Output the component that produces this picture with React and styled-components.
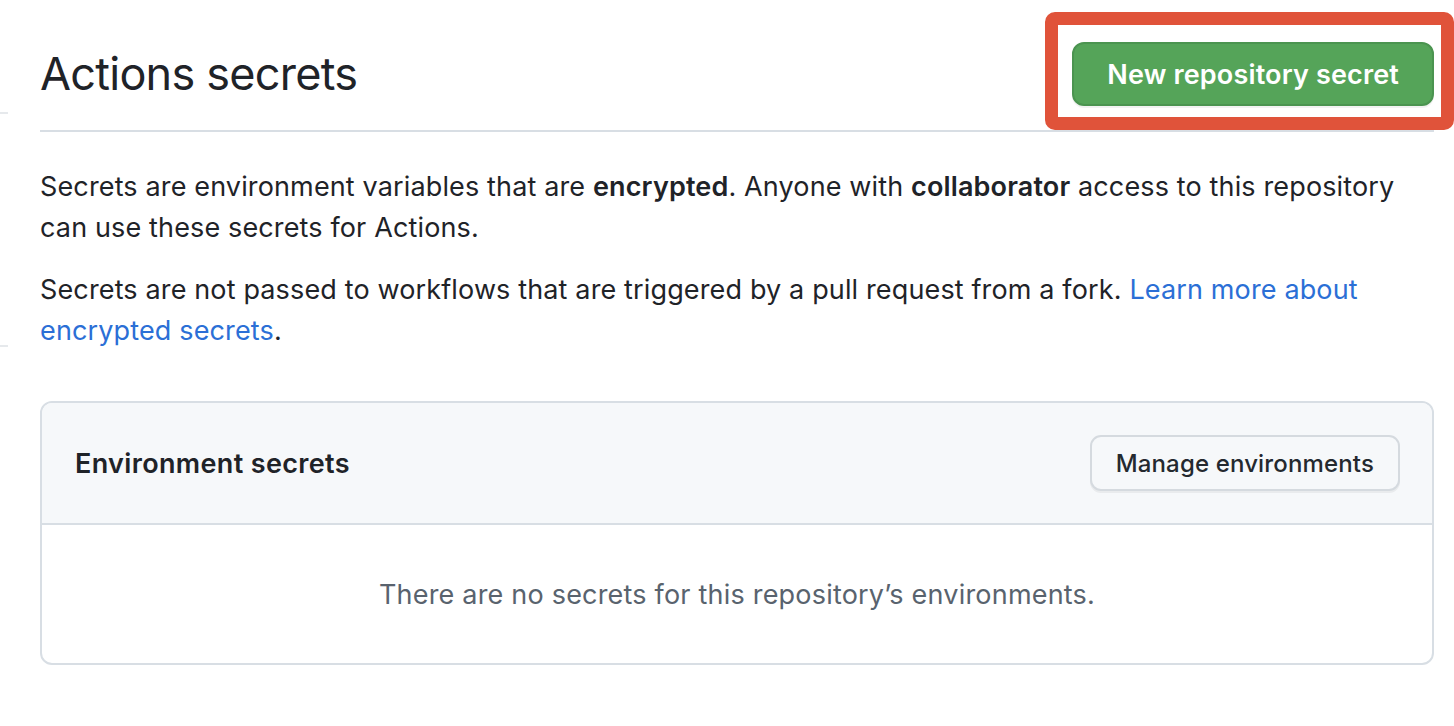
import React from 'react'
import styled, { createGlobalStyle } from 'styled-components'

const GlobalStyle = createGlobalStyle`
  body {
    margin: 0;
    background: #ffffff;
    font-family: Inter, "Noto Sans", "Liberation Sans", sans-serif;
    color: #1f2328;
  }
`

const Page = styled.div`
  display: flex;
  gap: 32px;
  padding-right: 20px;
`

const Sidebar = styled.div`
  width: 8px;
  flex-shrink: 0;
  display: flex;
  flex-direction: column;
`

const SideRule = styled.div`
  height: 2px;
  background: #e6e9ec;
  margin-top: ${p => p.$offset}px;
`

const Main = styled.main`
  flex: 1;
  min-width: 0;
`

const SubHead = styled.div`
  display: flex;
  align-items: center;
  justify-content: space-between;
  padding: 42px 0 24px;
  border-bottom: 2px solid #d8dee4;
`

const Title = styled.h2`
  margin: 0;
  font-size: 45px;
  font-weight: 400;
  letter-spacing: -0.75px;
  line-height: 58px;
  color: #1f2328;
`

const Highlight = styled.div`
  position: relative;
`

const HighlightRing = styled.div`
  position: absolute;
  top: -30px;
  left: -27px;
  right: -20px;
  bottom: -24px;
  border: 13px solid #e0533a;
  border-radius: 10px;
  pointer-events: none;
`

const Button = styled.button`
  display: flex;
  align-items: center;
  justify-content: center;
  height: ${p => p.$height}px;
  padding: 0 ${p => p.$pad}px;
  font-family: inherit;
  font-size: ${p => p.$size}px;
  font-weight: ${p => (p.$primary ? 600 : 500)};
  letter-spacing: 0.15px;
  color: ${p => (p.$primary ? '#ffffff' : '#24292f')};
  background: ${p => (p.$primary ? '#55a459' : '#f6f8fa')};
  border: 2px solid ${p => (p.$primary ? '#4b9450' : '#d5dadf')};
  border-radius: ${p => (p.$primary ? 12 : 11)}px;
  box-shadow: 0 2px 0 rgba(31, 35, 40, 0.06);
  cursor: pointer;
  white-space: nowrap;
`

const Paragraph = styled.p`
  margin: ${p => p.$top}px 0 0;
  font-size: 27px;
  letter-spacing: 0.14px;
  line-height: 41px;
  color: #1f2328;
`

const Strong = styled.strong`
  font-weight: 600;
`

const Link = styled.a`
  color: #2b6fd6;
  text-decoration: none;
`

const Box = styled.section`
  margin-top: 50px;
  border: 2px solid #d8dee4;
  border-radius: 12px;
  overflow: hidden;
`

const BoxHeader = styled.div`
  display: flex;
  align-items: center;
  justify-content: space-between;
  height: 120px;
  padding: 0 32px 0 33px;
  background: #f6f8fa;
  border-bottom: 2px solid #d8dee4;
`

const BoxTitle = styled.h3`
  margin: 0;
  font-size: 27px;
  letter-spacing: 0.35px;
  font-weight: 600;
  color: #1f2328;
`

const BlankSlate = styled.div`
  height: 138px;
  display: flex;
  align-items: center;
  justify-content: center;
  font-size: 27px;
  letter-spacing: 0.2px;
  color: #59636e;
`

export default function App() {
  return (
    <>
      <GlobalStyle />
      <Page>
        <Sidebar>
          <SideRule $offset={112} />
          <SideRule $offset={231} />
        </Sidebar>
        <Main>
          <SubHead>
            <Title>Actions secrets</Title>
            <Highlight>
              <Button $primary $height={64} $pad={33} $size={27}>
                New repository secret
              </Button>
              <HighlightRing />
            </Highlight>
          </SubHead>

          <Paragraph $top={34}>
            Secrets are environment variables that are <Strong>encrypted</Strong>. Anyone with{' '}
            <Strong>collaborator</Strong> access to this repository can use these secrets for Actions.
          </Paragraph>
          <Paragraph $top={21}>
            Secrets are not passed to workflows that are triggered by a pull request from a fork.{' '}
            <Link href="#">Learn more about encrypted secrets</Link>.
          </Paragraph>

          <Box>
            <BoxHeader>
              <BoxTitle>Environment secrets</BoxTitle>
              <Button $height={56} $pad={24} $size={24}>
                Manage environments
              </Button>
            </BoxHeader>
            <BlankSlate>There are no secrets for this repository’s environments.</BlankSlate>
          </Box>
        </Main>
      </Page>
    </>
  )
}
